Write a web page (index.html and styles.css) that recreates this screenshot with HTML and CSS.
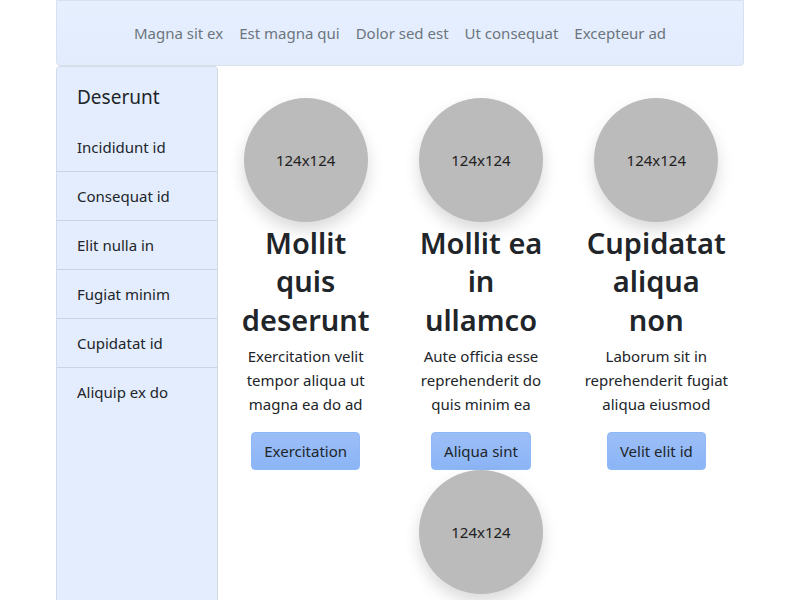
FILE: index.html
```html
<!DOCTYPE html>
<html lang="en">
<head>
<meta charset="utf-8">
<title>Page</title>
<link rel="stylesheet" href="styles.css">
</head>
<body>
<div class="container">
  <nav class="navbar">
    <a class="nav-link" href="#">Magna sit ex</a>
    <a class="nav-link" href="#">Est magna qui</a>
    <a class="nav-link" href="#">Dolor sed est</a>
    <a class="nav-link" href="#">Ut consequat</a>
    <a class="nav-link" href="#">Excepteur ad</a>
  </nav>
  <div class="layout">
    <aside class="sidebar">
      <div class="sidebar-title">Deserunt</div>
      <ul class="side-list">
        <li class="side-item">Incididunt id</li>
        <li class="side-item">Consequat id</li>
        <li class="side-item">Elit nulla in</li>
        <li class="side-item">Fugiat minim</li>
        <li class="side-item">Cupidatat id</li>
        <li class="side-item">Aliquip ex do</li>
      </ul>
    </aside>
    <main class="main">
      <div class="card">
        <div class="avatar">124x124</div>
        <h2 class="card-title">Mollit quis deserunt</h2>
        <p class="card-text">Exercitation velit tempor aliqua ut magna ea do ad</p>
        <button class="btn">Exercitation</button>
      </div>
      <div class="card">
        <div class="avatar">124x124</div>
        <h2 class="card-title">Mollit ea in ullamco</h2>
        <p class="card-text">Aute officia esse reprehenderit do quis minim ea</p>
        <button class="btn">Aliqua sint</button>
      </div>
      <div class="card">
        <div class="avatar">124x124</div>
        <h2 class="card-title">Cupidatat aliqua non</h2>
        <p class="card-text">Laborum sit in reprehenderit fugiat aliqua eiusmod</p>
        <button class="btn">Velit elit id</button>
      </div>
      <div class="card">
        <div class="avatar">124x124</div>
      </div>
    </main>
  </div>
</div>
</body>
</html>
```

FILE: styles.css
```css
* { box-sizing: border-box; }

html, body {
  margin: 0;
  padding: 0;
  height: 100%;
  overflow: hidden;
}

body {
  font-family: "Segoe UI", "Noto Sans", "Open Sans", sans-serif;
  font-size: 15px;
  line-height: 24px;
  color: #212529;
  background: #ffffff;
}

.container {
  width: 688px;
  margin: 0 auto;
}

.navbar {
  display: flex;
  justify-content: center;
  padding: 12px 0;
  background: linear-gradient(#e6effe, #e3ecfd);
  border: 1px solid #d9e1ec;
  border-radius: 0 0 4px 4px;
}

.nav-link {
  display: block;
  padding: 8px 8px;
  color: #6c757d;
  text-decoration: none;
  line-height: 24px;
}

.layout {
  display: flex;
  align-items: flex-start;
}

.sidebar {
  flex: 0 0 162px;
  width: 162px;
  min-height: 600px;
  background: #e4edfe;
  border: 1px solid #d3dbe7;
  border-radius: 4px 4px 0 0;
}

.sidebar-title {
  font-size: 19px;
  line-height: 24px;
  padding: 18px 20px 14px;
}

.side-list {
  list-style: none;
  margin: 0;
  padding: 0;
}

.side-item {
  padding: 12px 20px;
  line-height: 24px;
  border-bottom: 1px solid #c9d3e2;
}

.side-item:last-child {
  border-bottom: none;
}

.main {
  flex: 1 1 auto;
  display: flex;
  flex-wrap: wrap;
  justify-content: center;
  padding-top: 32px;
}

.card {
  flex: 0 0 33.3333%;
  padding: 0 12px;
  display: flex;
  flex-direction: column;
  align-items: center;
  text-align: center;
}

.avatar {
  width: 124px;
  height: 124px;
  border-radius: 50%;
  background: #bbbbbb;
  color: #222222;
  font-size: 15px;
  display: flex;
  align-items: center;
  justify-content: center;
  box-shadow: 0 8px 16px rgba(0, 0, 0, 0.15);
}

.card-title {
  max-width: 144px;
  margin: 0 0 5px;
  padding-top: 2px;
  font-size: 29px;
  font-weight: 600;
  line-height: 38.4px;
}

.card-text {
  margin: 0 0 16px;
  line-height: 24px;
}

.btn {
  font-family: inherit;
  font-size: 15px;
  line-height: 24px;
  color: #212529;
  padding: 6px 12px;
  background: linear-gradient(#9cbef6, #8bb5f7);
  border: 1px solid #8fb8f7;
  border-radius: 4px;
}
```
